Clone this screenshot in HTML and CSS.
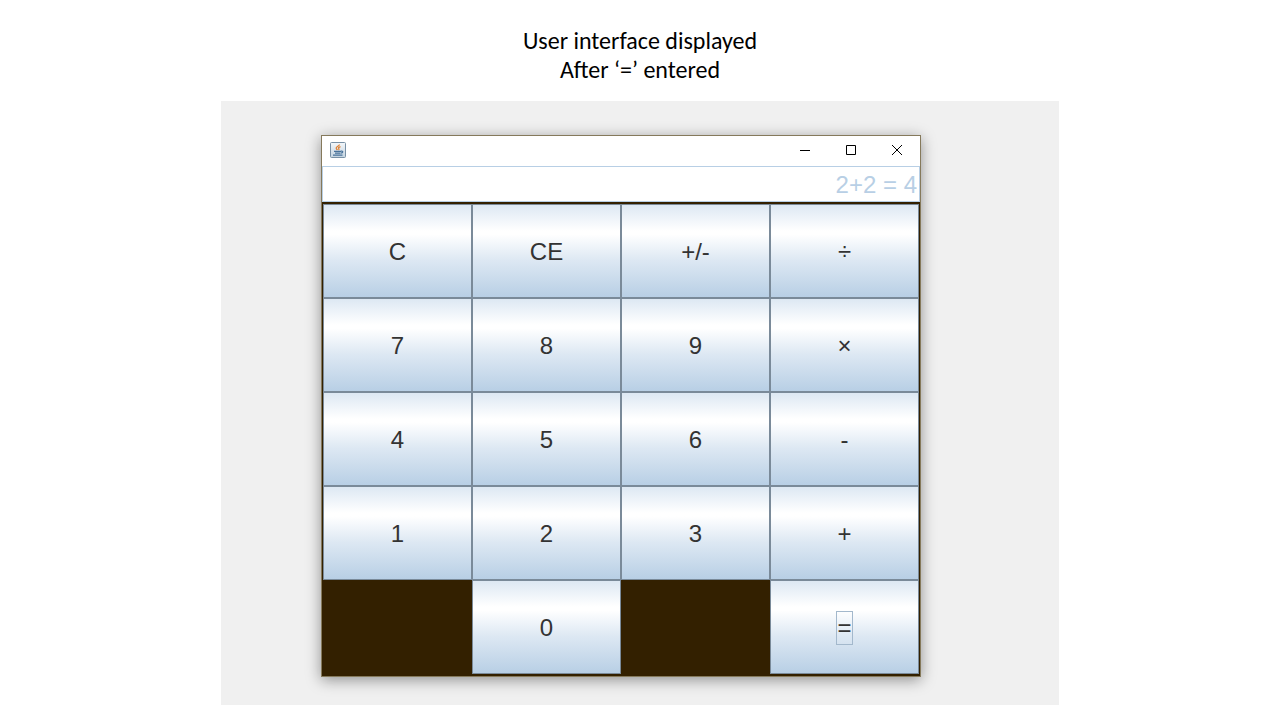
FILE: index.html
```
<!DOCTYPE html>
<html lang="en">
<head>
<meta charset="utf-8">
<meta name="viewport" content="width=device-width, initial-scale=1">
<title>Calculator</title>
<link rel="stylesheet" href="styles.css">
</head>
<body>
<main class="slide">
  <h1 class="caption">User interface displayed<br>After ‘=’ entered</h1>
  <div class="stage">
    <section class="window" aria-label="Calculator">
      <header class="titlebar">
        <svg class="app-icon" viewBox="0 0 16 16" aria-hidden="true">
          <defs><linearGradient id="tile" x1="0" y1="0" x2="0" y2="1"><stop offset="0" stop-color="#f4f7fa"/><stop offset="1" stop-color="#c3d3e0"/></linearGradient></defs>
          <rect x=".5" y=".5" width="15" height="15" rx="1" fill="url(#tile)" stroke="#7890a5"/>
          <path d="M9.500 2.500C9.500 4 6 4.600 6.200 6.200c.1.800.8 1.200 1.200 1.800M10.500 4.600C8.200 5.300 8.200 6 8.900 6.800c.4.600 0 .9-.5 1.300" fill="none" stroke="#df8034" stroke-width="1.300"/>
          <path d="M4 9.300h7M5 11.200h5.300M3 13.200h9.500M11 9.200c2.400-.5 2.400 1.700-.3 2" fill="none" stroke="#48729a" stroke-width="1.200"/>
        </svg>
        <div class="controls">
          <button class="control" type="button" aria-label="Minimize"><svg viewBox="0 0 10 10"><path d="M0 5.500h10"/></svg></button>
          <button class="control" type="button" aria-label="Maximize"><svg viewBox="0 0 10 10"><path d="M.5.5h9v9h-9z"/></svg></button>
          <button class="control" type="button" aria-label="Close"><svg viewBox="0 0 10 10"><path d="M0 0l10 10M10 0L0 10"/></svg></button>
        </div>
      </header>
      <input class="display" type="text" value="2+2 = 4" aria-label="Result" readonly>
      <div class="keys">
        <button class="key" type="button">C</button>
        <button class="key" type="button">CE</button>
        <button class="key" type="button">+/-</button>
        <button class="key" type="button">÷</button>
        <button class="key" type="button">7</button>
        <button class="key" type="button">8</button>
        <button class="key" type="button">9</button>
        <button class="key" type="button">×</button>
        <button class="key" type="button">4</button>
        <button class="key" type="button">5</button>
        <button class="key" type="button">6</button>
        <button class="key" type="button">-</button>
        <button class="key" type="button">1</button>
        <button class="key" type="button">2</button>
        <button class="key" type="button">3</button>
        <button class="key" type="button">+</button>
        <button class="key key-zero" type="button">0</button>
        <button class="key key-equals" type="button"><span class="focus">=</span></button>
      </div>
    </section>
  </div>
</main>
</body>
</html>
```
FILE: styles.css
```
* {
  box-sizing: border-box;
}

body {
  margin: 0;
  background: #fff;
  font-family: "Liberation Sans", Arial, sans-serif;
}

.slide {
  max-width: 838px;
  margin: 0 auto;
  padding: 26px 0 15px;
}

.caption {
  margin: 0 0 17px;
  color: #000;
  font: 400 24px/29px Carlito, Lato, sans-serif;
  text-align: center;
}

.stage {
  padding: 34px 138px 28px 100px;
  background: #f0f0f0;
}

.window {
  border: 1px solid #85795b;
  background: #332000;
  box-shadow: 0 3px 14px rgba(0, 0, 0, 0.4);
}

.titlebar {
  display: flex;
  align-items: center;
  justify-content: space-between;
  height: 30px;
  padding: 0 0 2px 8px;
  background: #fff;
}

.app-icon {
  width: 16px;
  height: 16px;
}

.controls {
  display: flex;
}

.control {
  display: grid;
  place-items: center;
  width: 46px;
  height: 28px;
  padding: 0;
  border: 0;
  background: none;
}

.control svg {
  width: 10px;
  height: 10px;
  overflow: visible;
  fill: none;
  stroke: #000;
}

.display {
  display: block;
  width: 100%;
  height: 36px;
  padding: 2px 2px 0;
  border: 1px solid #b8cfe5;
  border-radius: 0;
  outline: 0;
  background: #fff;
  color: #b8cfe5;
  font: 24px/32px "Liberation Sans", Arial, sans-serif;
  text-align: right;
}

.keys {
  display: grid;
  grid-template-columns: repeat(4, 1fr);
  grid-auto-rows: 94px;
  padding: 2px 1px;
}

.key {
  display: grid;
  place-items: center;
  padding: 2px 0 0;
  border: 1px solid #7a8a99;
  border-radius: 0;
  background: linear-gradient(#dde8f3, #fff 28%, #fff 32%, #dde8f3 60%, #b8cfe5);
  color: #333;
  font: 24px/32px "Liberation Sans", Arial, sans-serif;
}

.key-zero {
  grid-column: 2;
}

.key-equals {
  grid-column: 4;
}

.focus {
  border: 1px solid #a3b8cc;
}
```
